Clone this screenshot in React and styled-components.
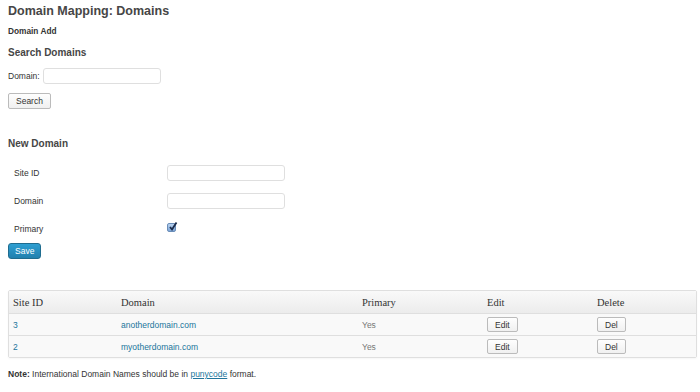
import styled, { createGlobalStyle } from "styled-components";

const Global = createGlobalStyle`
  body {
    margin: 0;
    background: #fff;
    font-family: "Liberation Sans", Arial, sans-serif;
    color: #333;
  }
`;

const Page = styled.div`
  padding: 0 3px 0 8px;
  width: 700px;
  box-sizing: border-box;
`;

const Title = styled.h2`
  margin: 0;
  padding-top: 2px;
  font-size: 12.5px;
  line-height: 18px;
  font-weight: bold;
  color: #464646;
`;

const SubTitle = styled.h4`
  margin: 5px 0 0;
  font-size: 8.3px;
  line-height: 12px;
  font-weight: bold;
  color: #333;
`;

const Heading = styled.h3`
  margin: ${(p) => p.$top}px 0 0;
  font-size: 10px;
  line-height: 14px;
  font-weight: bold;
  color: #464646;
`;

const SearchRow = styled.div`
  display: flex;
  align-items: center;
  gap: 3px;
  margin-top: 8px;
  font-size: 8.5px;
  color: #333;
`;

const Input = styled.input`
  box-sizing: border-box;
  width: 118px;
  height: 16px;
  border: 1px solid #dfdfdf;
  border-radius: 3px;
  background: #fff;
  padding: 0 4px;
  font-size: 9px;
`;

const Button = styled.button`
  box-sizing: border-box;
  height: ${(p) => p.$h || 16}px;
  padding: 0 ${(p) => p.$px || 7}px;
  border: 1px solid #bbb;
  border-radius: 2px;
  background: linear-gradient(#fefefe, #f0f0f0);
  font-family: "Liberation Sans", Arial, sans-serif;
  font-size: 8.5px;
  color: #333;
  cursor: pointer;
`;

const SearchButton = styled(Button)`
  display: block;
  margin-top: 9px;
`;

const FormTable = styled.div`
  display: grid;
  grid-template-columns: 153px 118px;
  grid-auto-rows: 28px;
  align-items: center;
  margin-top: 8px;
  padding-left: 6px;
  font-size: 8.5px;
  color: #333;
`;

const Check = styled.span`
  box-sizing: border-box;
  display: inline-flex;
  width: 9px;
  height: 9px;
  border: 1px solid #6a8db8;
  border-radius: 2px;
  background: linear-gradient(#b9d3f0, #7ea6d8);
  position: relative;
  margin-top: -2px;
`;

const CheckMark = styled.svg`
  position: absolute;
  left: 0;
  top: -3px;
`;

const SaveButton = styled.button`
  box-sizing: border-box;
  display: block;
  height: 16px;
  padding: 0 6px;
  margin-top: 0;
  border: 1px solid #1f6c8f;
  border-radius: 3px;
  background: linear-gradient(#2e9fd2, #2180ae);
  color: #fff;
  font-family: "Liberation Sans", Arial, sans-serif;
  font-size: 8.5px;
`;

const Table = styled.table`
  margin-top: 31px;
  width: 689px;
  table-layout: fixed;
  border-collapse: separate;
  border-spacing: 0;
  border: 1px solid #dfdfdf;
  border-radius: 2px;
  box-shadow: 0 1px 2px rgba(0, 0, 0, 0.04);
`;

const Th = styled.th`
  box-sizing: border-box;
  height: 23px;
  padding: 0 0 0 4px;
  text-align: left;
  font-family: "Liberation Serif", Georgia, serif;
  font-weight: normal;
  font-size: 10.5px;
  color: #333;
  background: linear-gradient(#f9f9f9, #ececec);
  border-bottom: 1px solid #dfdfdf;
  width: ${(p) => (p.$w ? `${p.$w}px` : "auto")};
`;

const Td = styled.td`
  height: 21px;
  padding: 0 0 0 4px;
  font-size: 8.5px;
  color: ${(p) => (p.$muted ? "#777" : "#333")};
  background: #f9f9f9;
  border-top: ${(p) => (p.$first ? "none" : "1px solid #dfdfdf")};
  vertical-align: middle;
`;

const Link = styled.a`
  color: #21759b;
  text-decoration: none;
`;

const Note = styled.p`
  margin: 11px 0 0;
  font-size: 8.5px;
  color: #333;
`;

const Underlined = styled.a`
  color: #21759b;
  text-decoration: underline;
`;

const rows = [
  { id: "3", domain: "anotherdomain.com", primary: "Yes" },
  { id: "2", domain: "myotherdomain.com", primary: "Yes" },
];

export default function App() {
  return (
    <Page>
      <Global />
      <Title>Domain Mapping: Domains</Title>
      <SubTitle>Domain Add</SubTitle>
      <Heading $top={9}>Search Domains</Heading>
      <SearchRow>
        <span>Domain:</span>
        <Input />
      </SearchRow>
      <SearchButton>Search</SearchButton>
      <Heading $top={28}>New Domain</Heading>
      <FormTable>
        <span>Site ID</span>
        <Input />
        <span>Domain</span>
        <Input />
        <span>Primary</span>
        <span>
          <Check>
            <CheckMark width="10" height="11" viewBox="0 0 10 11">
              <path d="M2 6 L4 8.5 L8.5 1.5" fill="none" stroke="#1a2b4a" strokeWidth="1.8" />
            </CheckMark>
          </Check>
        </span>
      </FormTable>
      <SaveButton>Save</SaveButton>
      <Table>
        <thead>
          <tr>
            <Th $w={108}>Site ID</Th>
            <Th $w={241}>Domain</Th>
            <Th $w={125}>Primary</Th>
            <Th $w={110}>Edit</Th>
            <Th>Delete</Th>
          </tr>
        </thead>
        <tbody>
          {rows.map((r, i) => (
            <tr key={r.id}>
              <Td $first={i === 0}>
                <Link href="#">{r.id}</Link>
              </Td>
              <Td $first={i === 0}>
                <Link href="#">{r.domain}</Link>
              </Td>
              <Td $first={i === 0} $muted>
                {r.primary}
              </Td>
              <Td $first={i === 0}>
                <Button $h={15} $px={7}>Edit</Button>
              </Td>
              <Td $first={i === 0}>
                <Button $h={15} $px={7}>Del</Button>
              </Td>
            </tr>
          ))}
        </tbody>
      </Table>
      <Note>
        <b>Note:</b> International Domain Names should be in{" "}
        <Underlined href="#">punycode</Underlined> format.
      </Note>
    </Page>
  );
}
